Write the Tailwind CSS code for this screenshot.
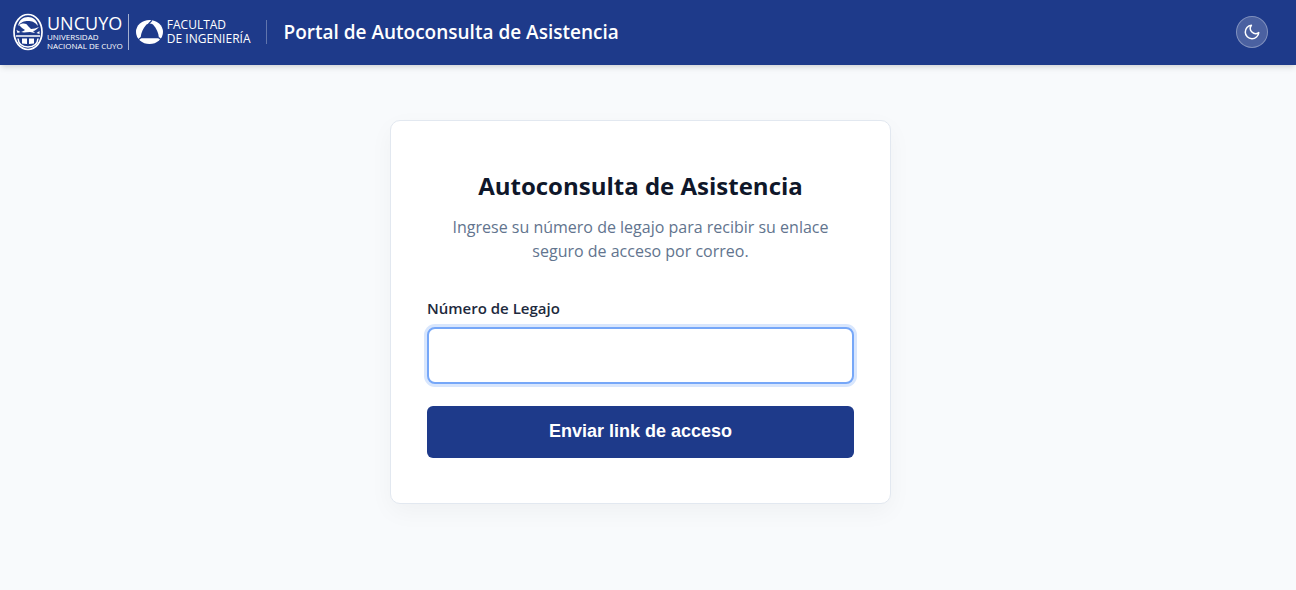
<!DOCTYPE html>
<html lang="es">
<head>
  <meta charset="UTF-8" />
  <meta name="viewport" content="width=device-width, initial-scale=1" />
  <title>Portal de Autoconsulta de Asistencia</title>
  <script src="https://cdn.jsdelivr.net/npm/@tailwindcss/browser@4"></script>
</head>
<body class="bg-slate-50 min-h-screen flex flex-col font-['Open_Sans','Noto_Sans',sans-serif] text-[#0f172a]">

  <header class="h-[65px] bg-[#1e3a8a] text-white flex items-center justify-between pl-[13px] pr-7 pb-px shadow-md">
    <div class="flex items-center">

      <!-- Logo UNCUYO -->
      <div class="flex items-center gap-1">
        <svg class="w-[30px] h-[38px]" viewBox="0 0 30 38" fill="none" aria-hidden="true">
          <ellipse cx="15" cy="19" rx="14" ry="17.5" stroke="#fff" stroke-width="1.700" />
          <!-- cielo -->
          <path d="M5 13C6 7 10 4 15 4s9 3 10 9c-3-4-6-5-10-5S8 9 5 13z" fill="#fff" />
          <!-- cóndor -->
          <path d="M6 12c4-2 7-2 9 1l3 3c3 0 5-1 8-2-2 2-4 4-6 4l2 2-5-1c-3 0-6 1-9 0 2-1 3-1 4-2-2-1-4-3-6-5z" fill="#fff" />
          <path d="M3.500 17l4 2-3 1zM26.500 18l-3 2 3 1z" fill="#fff" />
          <path d="M3 23h24" stroke="#fff" stroke-width="1.500" />
          <!-- libro -->
          <path d="M5 25.500c.5 5 4 8.500 10 8.500s9.500-3.500 10-8.500" stroke="#fff" stroke-width="1.500" />
          <path d="M9 25.500h5v5.500l-5-.5zM16 25.500h5v5l-5 .5z" fill="#fff" />
        </svg>
        <div class="flex flex-col whitespace-nowrap">
          <span class="text-[18px] leading-[18px]">UNCUYO</span>
          <span class="text-[8px] leading-[9px]">UNIVERSIDAD</span>
          <span class="text-[8px] leading-[9px]">NACIONAL DE CUYO</span>
        </div>
      </div>

      <div class="w-px h-9 bg-white/60 ml-[5px] mr-[7px]"></div>

      <!-- Logo Facultad -->
      <div class="flex items-center gap-1">
        <svg class="w-[27px] h-6" viewBox="0 0 27 24" aria-hidden="true">
          <ellipse cx="13.500" cy="12" rx="13.500" ry="12" fill="#fff" />
          <path d="M10.500 4.500c2-1.500 4.500-1.500 6.500 0C20.500 8 22.500 13 23 18.200H4.500C5 13 7 8 10.500 4.500z" fill="#1e3a8a" />
          <path d="M12.500 4L16 .3M5 17.500L2 20M22.500 17.500l3 2.500" fill="none" stroke="#1e3a8a" stroke-width="1.200" />
        </svg>
        <div class="flex flex-col text-[12px] leading-[14px] whitespace-nowrap">
          <span>FACULTAD</span>
          <span>DE INGENIERÍA</span>
        </div>
      </div>

      <div class="w-px h-6 bg-white/30 mx-4"></div>
      <span class="text-[19px] leading-7 font-semibold whitespace-nowrap">Portal de Autoconsulta de Asistencia</span>
    </div>

    <button type="button" aria-label="Cambiar tema" class="size-8 rounded-full bg-white/20 border border-white/30 flex items-center justify-center">
      <svg class="size-[18px]" viewBox="0 0 24 24" fill="none" stroke="#fff" stroke-width="2" stroke-linecap="round" stroke-linejoin="round" aria-hidden="true">
        <path d="M21 12.790A9 9 0 1 1 11.210 3 7 7 0 0 0 21 12.790z" />
      </svg>
    </button>
  </header>

  <main class="flex-1 pt-[55px] pl-4 pr-[31px] pb-10">
    <section class="max-w-[501px] mx-auto bg-white border border-slate-200 rounded-[10px] shadow-[0_8px_24px_rgba(0,0,0,0.04)] px-9 pt-[49px] pb-[45px]">
      <h1 class="text-2xl font-bold text-center">Autoconsulta de Asistencia</h1>
      <p class="mt-[13px] px-4 text-base text-center text-slate-500">
        Ingrese su número de legajo para recibir su enlace seguro de acceso por correo.
      </p>

      <form class="mt-[33px] flex flex-col">
        <label for="legajo" class="text-[15px] leading-6 font-semibold text-slate-800">Número de Legajo</label>
        <input id="legajo" name="legajo" type="text" autocomplete="off"
          class="mt-[7px] h-[57px] px-4 rounded-lg bg-white border-2 border-[#76a7f8] ring-3 ring-[#d8e6fd] outline-none" />
        <button type="submit" class="mt-[22px] h-[52px] pb-[3px] rounded-md bg-[#1e3a8a] text-white font-['Liberation_Sans',sans-serif] text-lg font-bold">
          Enviar link de acceso
        </button>
      </form>
    </section>
  </main>

</body>
</html>
